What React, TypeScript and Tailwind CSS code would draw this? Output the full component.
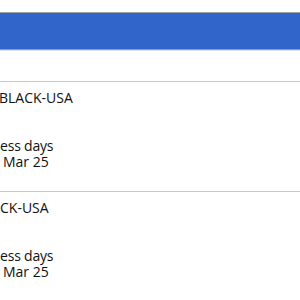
import { memo } from "react"

interface OrderRowProps {
  first: string
  firstOffset: string
}

const OrderRow = memo(({ first, firstOffset }: OrderRowProps) => {
  return (
    <div className="flex flex-col border-t border-[#c9c9c9] pt-[8px] pb-[21px] leading-[16px] text-[14px] text-[#111] whitespace-nowrap">
      <span className={firstOffset}>{first}</span>
      <span className="h-[16px]" />
      <span className="h-[16px]" />
      <span className="tracking-[-0.2px]">ess days</span>
      <span className="ml-[3px]">Mar 25</span>
    </div>
  )
})

export default function App() {
  return (
    <div className="w-[300px] h-[300px] overflow-hidden bg-white" style={{ fontFamily: '"Open Sans", "DejaVu Sans", sans-serif' }}>
      <div className="h-[12px]" />
      <div className="h-[38px] border-t border-b border-t-[#a3a3a3] border-b-[#9a9a9a] bg-[#3165c9]" />
      <div className="h-[31px] border-t border-[#e2e2e2]" />
      <OrderRow first="BLACK-USA" firstOffset="-ml-[1px]" />
      <OrderRow first="CK-USA" firstOffset="ml-0" />
    </div>
  )
}
